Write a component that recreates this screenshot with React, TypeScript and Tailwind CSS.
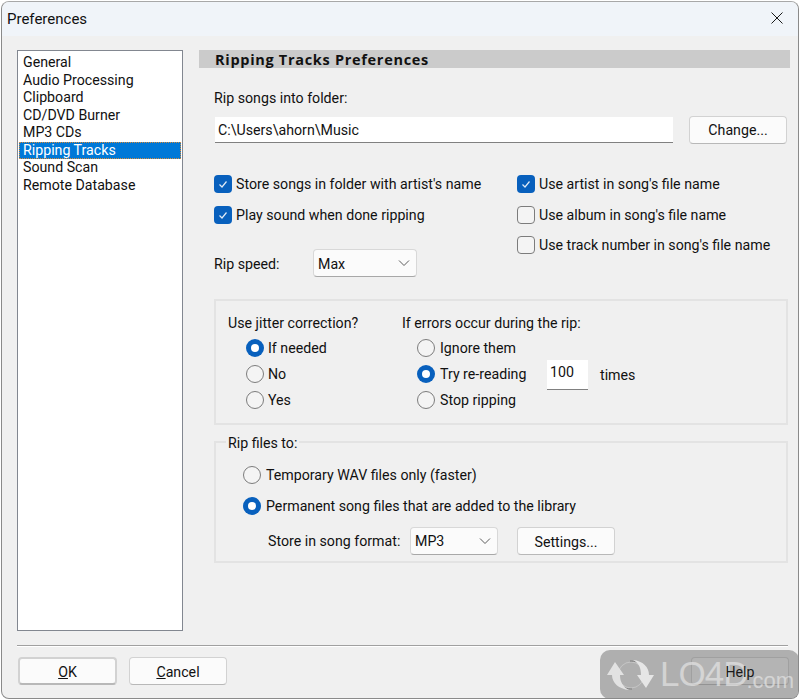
import React from "react";

const Check = ({ checked, label, className = "" }: { checked?: boolean; label: string; className?: string }) => (
  <div className={`flex items-center h-[18px] ${className}`}>
    {checked ? (
      <span className="w-[18px] h-[18px] rounded-[4px] bg-[#0860bd] flex items-center justify-center">
        <svg width="12" height="12" viewBox="0 0 12 12" fill="none">
          <path d="M2.5 6.5 L5 9 L9.5 3.5" stroke="#dfeaf6" strokeWidth="1.2" />
        </svg>
      </span>
    ) : (
      <span className="w-[18px] h-[18px] rounded-[4px] border border-[#7c7c7c] bg-[#f4f4f4]" />
    )}
    <span className="ml-[4px] whitespace-nowrap">{label}</span>
  </div>
);

const Radio = ({ checked, label, className = "", labelClass = "ml-[4px]" }: { checked?: boolean; label: string; className?: string; labelClass?: string }) => (
  <div className={`flex items-center h-[18px] ${className}`}>
    {checked ? (
      <span className="w-[18px] h-[18px] rounded-full bg-[#0860bd] flex items-center justify-center">
        <span className="w-[8px] h-[8px] rounded-full bg-white" />
      </span>
    ) : (
      <span className="w-[18px] h-[18px] rounded-full border border-[#7c7c7c] bg-[#f4f4f4]" />
    )}
    <span className={`${labelClass} whitespace-nowrap`}>{label}</span>
  </div>
);

const Btn = ({ children, className = "" }: { children: React.ReactNode; className?: string }) => (
  <div className={`h-[28px] pt-[1px] rounded-[4px] border border-[#d2d2d2] border-b-[#b8b8b8] bg-[#fbfbfb] flex items-center justify-center ${className}`}>
    {children}
  </div>
);

const Select = ({ value, className = "", valueClass = "" }: { value: string; className?: string; valueClass?: string }) => (
  <div className={`h-[28px] rounded-[4px] border border-[#d8d8d8] border-b-[#a8a8a8] bg-[#fbfbfb] flex items-center justify-between pl-[4px] pr-[6px] ${className}`}>
    <span className={valueClass}>{value}</span>
    <svg width="12" height="8" viewBox="0 0 12 8" fill="none">
      <path d="M1 1.5 L6 6.5 L11 1.5" stroke="#5c5c5c" strokeWidth="1" />
    </svg>
  </div>
);

const items = ["General", "Audio Processing", "Clipboard", "CD/DVD Burner", "MP3 CDs", "Ripping Tracks", "Sound Scan", "Remote Database"];

export default function App() {
  return (
    <div className="w-[800px] h-[700px] bg-white pl-[1px] pt-[1px]">
      <div className="relative w-[798px] h-[698px] overflow-hidden bg-[#f0f0f0] text-[14.2px] leading-[18px] text-[#111] font-['Roboto','Noto_Sans',sans-serif] border border-[#8a8a8a] border-t-[#a8a8a8] rounded-[8px]">
        <div className="h-[34px] bg-[#f0f4f9] flex items-center justify-between pl-[5px] pr-[15px]">
          <span className="text-[15px]">Preferences</span>
          <svg width="12" height="12" viewBox="0 0 12 12" fill="none" className="mb-[2px]">
            <path d="M0.5 0.5 L11.5 11.5 M11.5 0.5 L0.5 11.5" stroke="#1a1a1a" strokeWidth="1" />
          </svg>
        </div>

        <div className="flex pl-[15px] pt-[14px] h-[609px]">
          <div className="w-[166px] h-[581px] bg-white border border-[#828790] pl-[1px] pr-[1px] pt-[3px] shrink-0">
            {items.map((t) =>
              t === "Ripping Tracks" ? (
                <div key={t} className="h-[17.5px] leading-[17.5px] pl-[4px] bg-[#0078d7] text-white outline-1 outline-dotted -outline-offset-1 outline-[#d98b3a]">{t}</div>
              ) : (
                <div key={t} className="h-[17.5px] leading-[17.5px] pl-[4px]">{t}</div>
              )
            )}
          </div>

          <div className="ml-[16px] w-[591px]">
            <div className="h-[18px] bg-[#cbcbcb] pl-[16px] font-bold font-['Open_Sans',sans-serif] text-[14.5px] leading-[19px] tracking-[0.7px]">Ripping Tracks Preferences</div>
            <div className="pl-[15px] mt-[21px]">Rip songs into folder:</div>

            <div className="flex mt-[9px] pl-[16px]">
              <div className="w-[458px] h-[26px] mt-[1px] bg-white border-b border-[#808080] pl-[3px] leading-[27px]">C:\Users\ahorn\Music</div>
              <Btn className="ml-[16px] w-[98px] !pt-0">Change...</Btn>
            </div>

            <div className="flex mt-[31px] pl-[15px]">
              <div className="w-[303px]">
                <Check checked label="Store songs in folder with artist's name" />
                <Check checked label="Play sound when done ripping" className="mt-[13px]" />
              </div>
              <div>
                <Check checked label="Use artist in song's file name" />
                <Check label="Use album in song's file name" className="mt-[13px]" />
                <Check label="Use track number in song's file name" className="mt-[12px]" />
              </div>
            </div>

            <div className="flex items-center -mt-[5px] pl-[15px]">
              <span className="w-[99px] translate-y-[1px]">Rip speed:</span>
              <Select value="Max" className="w-[104px]" valueClass="translate-y-[1px]" />
            </div>

            <div className="ml-[15px] mt-[22px] w-[574px] h-[126px] border-2 border-[#e3e3e3] flex pl-[12px] pt-[13px]">
              <div className="w-[174px]">
                <div>Use jitter correction?</div>
                <div className="pl-[18px] mt-[7px]">
                  <Radio checked label="If needed" />
                  <Radio label="No" className="mt-[8px]" />
                  <Radio label="Yes" className="mt-[8px]" />
                </div>
              </div>
              <div>
                <div>If errors occur during the rip:</div>
                <div className="pl-[15px] mt-[7px] flex">
                  <div className="w-[130px]">
                    <Radio label="Ignore them" labelClass="ml-[5px]" />
                    <Radio checked label="Try re-reading" className="mt-[8px]" labelClass="ml-[5px]" />
                    <Radio label="Stop ripping" className="mt-[8px]" labelClass="ml-[5px]" />
                  </div>
                  <div className="mt-[21px] w-[41px] h-[30px] bg-white border-b border-[#808080] pl-[3px] leading-[25px]">100</div>
                  <div className="ml-[12px] mt-[27px]">times</div>
                </div>
              </div>
            </div>

            <div className="relative ml-[15px] mt-[16px] w-[574px] h-[122px] border-2 border-[#e3e3e3] pt-[23px] pl-[27px]">
              <span className="absolute -top-[9px] left-[10px] px-[2px] bg-[#f0f0f0]">Rip files to:</span>
              <Radio label="Temporary WAV files only (faster)" labelClass="ml-[5px]" />
              <Radio checked label="Permanent song files that are added to the library" className="mt-[13px]" labelClass="ml-[5px]" />
              <div className="flex items-center mt-[11px]">
                <span className="ml-[25px] w-[142px] whitespace-nowrap">Store in song format:</span>
                <Select value="MP3" className="w-[88px]" />
                <Btn className="ml-[19px] w-[98px] mt-[1px]">Settings...</Btn>
              </div>
            </div>
          </div>
        </div>

        <div className="ml-[15px] h-[2px] bg-[#a0a0a0] w-[771px] border-b border-white" />

        <div className="flex pl-[16px] pr-[9px] mt-[10px]">
          <Btn className="w-[99px] border-2 border-[#0a74d0] border-b-[#0a74d0]"><span><u>O</u>K</span></Btn>
          <Btn className="ml-[12px] w-[98px]"><span><u>C</u>ancel</span></Btn>
          <Btn className="ml-auto w-[98px]"><span className="relative z-10 text-[#1a1a1a]">Help</span></Btn>
        </div>

        <div className="absolute -right-[1px] -bottom-[1px] w-[199px] h-[49px] rounded-[10px] bg-[#6e6e6e]/50 flex items-center pl-[7px] text-[#e0e0e0]/75">
          <svg width="48" height="36" viewBox="0 0 48 36" fill="none" className="shrink-0">
            <circle cx="24" cy="18" r="13" stroke="#cfcfcf" strokeWidth="1" opacity="0.7" />
            <path d="M13 27 C16 31 20 32 25 32" stroke="#7d7d7d" strokeWidth="1" />
            <path d="M35 9 C32 5 28 4 23 4" stroke="#7d7d7d" strokeWidth="1" />
            <path d="M8 5 L0 18 L5 18 C5 26 12 32 22 33 C16 30 13 25 13 18 L17 18 Z" fill="#e2e2e2" />
            <path d="M39 31 L47 18 L42 18 C42 10 36 4 26 3 C32 6 34 11 34 18 L30 18 Z" fill="#e6e6e6" />
          </svg>
          <span className="ml-[5px] text-[35px] leading-[40px] font-['Liberation_Sans',sans-serif] tracking-[-1px] mb-[1px]">LO4D</span>
          <span className="text-[22px] leading-[28px] font-['Liberation_Sans',sans-serif] mt-[12px] -ml-[1px]">.com</span>
        </div>
      </div>
    </div>
  );
}
